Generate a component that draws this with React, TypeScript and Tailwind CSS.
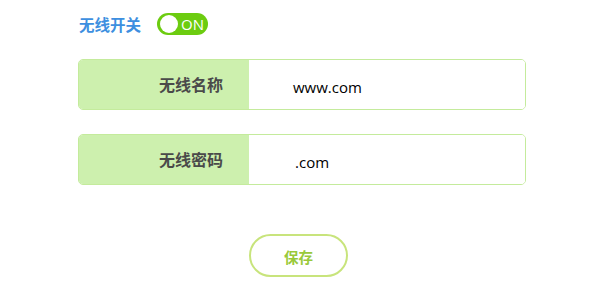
export default function App() {
  return (
    <div
      className="w-[600px] h-[289px] bg-white relative"
      style={{ fontFamily: '"Noto Sans CJK SC", "Noto Sans", sans-serif' }}
    >
      <div className="pl-[79px] pt-[13px] flex items-center">
        <span className="text-[15.5px] font-bold text-[#3d8fe0] leading-[22px]">无线开关</span>
        <div className="ml-[16px] w-[51px] h-[22px] rounded-full bg-[#6ccc10] flex items-center pl-[3px]">
          <div className="w-[18px] h-[18px] rounded-full bg-white" />
          <span
            className="ml-[3px] text-white text-[15px] font-medium leading-none"
            style={{ fontFamily: '"Open Sans", "Noto Sans", sans-serif' }}
          >
            ON
          </span>
        </div>
      </div>

      <div className="ml-[78px] mt-[24px] w-[448px] flex flex-col gap-[24px]">
        {[
          { label: "无线名称", value: "www.com", pad: "pl-[44px]" },
          { label: "无线密码", value: ".com", pad: "pl-[46px]" },
        ].map((f) => (
          <div
            key={f.label}
            className="h-[51px] border border-[#c4eb9c] rounded-[5px] flex overflow-hidden"
          >
            <div className="w-[170px] shrink-0 bg-[#cdf0ae] flex items-center justify-end pr-[26px] pb-[2px]">
              <span className="text-[16px] font-bold text-[#4a4a4a]">{f.label}</span>
            </div>
            <div className={`flex-1 bg-white flex items-center pt-[5px] ${f.pad}`}>
              <span
                className="text-[15px] text-black"
                style={{ fontFamily: '"Open Sans", "Noto Sans", sans-serif' }}
              >
                {f.value}
              </span>
            </div>
          </div>
        ))}
      </div>

      <div className="flex justify-center mt-[49px]">
        <button className="ml-[-3px] w-[99px] h-[43px] rounded-full border-2 border-[#c8e47c] bg-white text-[#99c93a] text-[14.5px] font-bold pt-[3px]">
          保存
        </button>
      </div>
    </div>
  );
}
